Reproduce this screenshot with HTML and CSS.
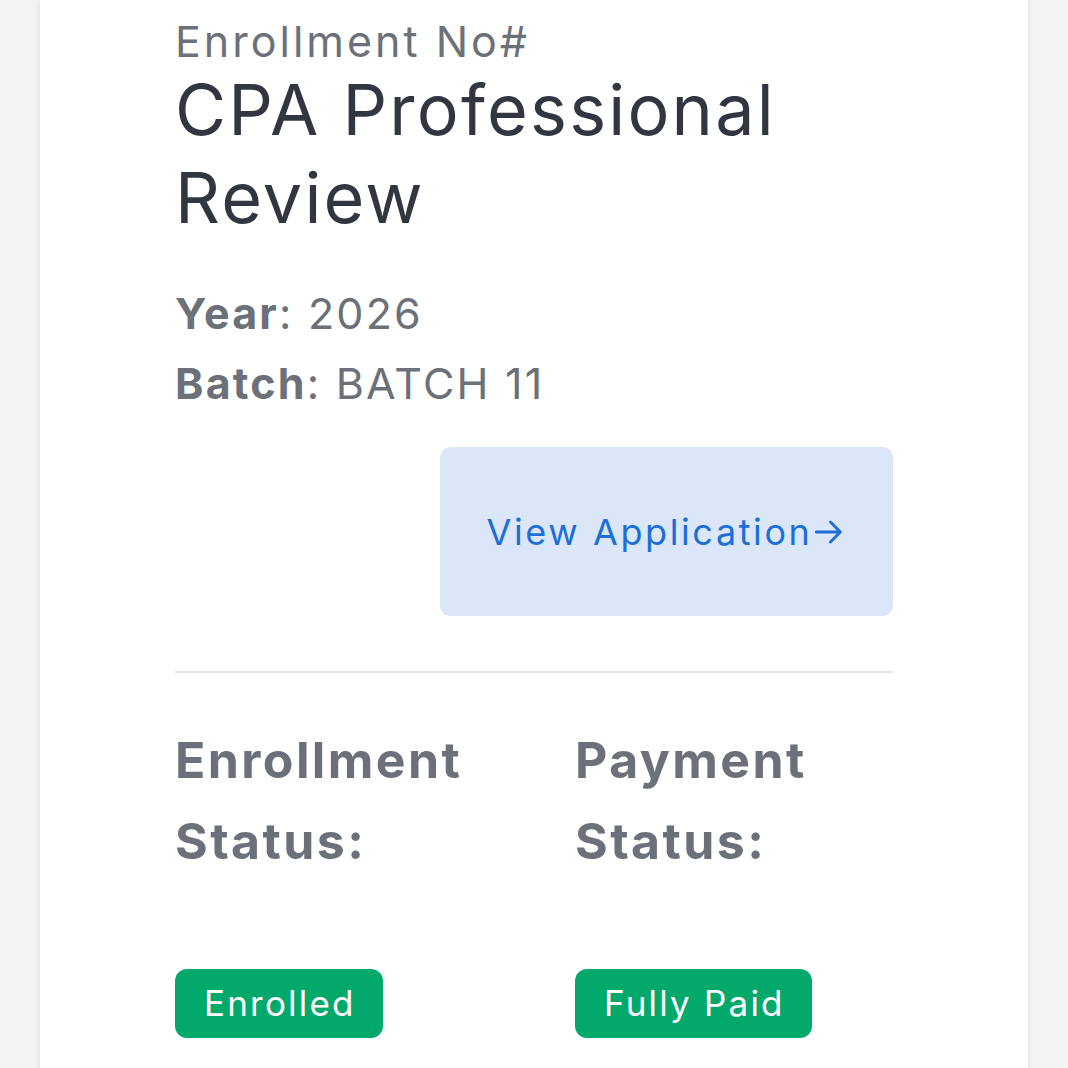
FILE: index.html
```html
<!DOCTYPE html>
<html>
<head>
<meta charset="utf-8">
<link rel="stylesheet" href="styles.css">
</head>
<body>
<div class="page">
  <div class="card">
    <div class="label">Enrollment No#</div>
    <h1 class="title">CPA Professional Review</h1>
    <div class="meta">
      <div class="meta-row"><b>Year</b>: 2026</div>
      <div class="meta-row"><b>Batch</b>: BATCH 11</div>
    </div>
    <div class="actions">
      <a class="btn" href="#">View Application<svg class="arrow" viewBox="0 0 24 24" width="34" height="34"><path d="M3 12h17M13 5l7 7-7 7" fill="none" stroke="currentColor" stroke-width="2" stroke-linecap="round" stroke-linejoin="round"/></svg></a>
    </div>
    <hr class="divider">
    <div class="status-grid">
      <div class="status">
        <div class="status-title">Enrollment Status:</div>
        <span class="badge">Enrolled</span>
      </div>
      <div class="status">
        <div class="status-title">Payment Status:</div>
        <span class="badge">Fully Paid</span>
      </div>
    </div>
  </div>
</div>
</body>
</html>
```

FILE: styles.css
```css
html, body {
  margin: 0;
  padding: 0;
  background: #f3f4f4;
  height: 1068px;
  overflow: hidden;
}
.page {
  padding-left: 40px;
  padding-right: 40px;
}
.card {
  background: #ffffff;
  box-shadow: 0 0 6px rgba(0,0,0,0.10);
  padding: 16px 135px 40px 135px;
  font-family: Inter, "Noto Sans", sans-serif;
  min-height: 1100px;
}
.label {
  font-size: 43px;
  color: #6b7079;
  line-height: 50px;
  letter-spacing: 3px;
}
.title {
  margin: 0;
  font-weight: 400;
  font-size: 70px;
  line-height: 88px;
  color: #313640;
  letter-spacing: 2.2px;
}
.meta {
  margin-top: 36px;
}
.meta-row {
  font-size: 43px;
  line-height: 70px;
  color: #6b7079;
  letter-spacing: 2.2px;
}
.meta-row b {
  font-weight: 700;
}
.actions {
  display: flex;
  justify-content: flex-end;
  margin-top: 29px;
}
.btn {
  width: 453px;
  height: 169px;
  box-sizing: border-box;
  background: #dbe7f9;
  border-radius: 10px;
  color: #1c6fd8;
  text-decoration: none;
  font-size: 36px;
  letter-spacing: 2.6px;
  display: flex;
  align-items: center;
  justify-content: center;
  gap: 0;
}
.arrow {
  display: block;
}
.divider {
  border: none;
  border-top: 2px solid #e3e5e7;
  margin: 55px 0 0 0;
}
.status-grid {
  display: grid;
  grid-template-columns: 1fr 1fr;
  column-gap: 82px;
  margin-top: 47px;
}
.status-title {
  font-size: 50px;
  font-weight: 700;
  line-height: 81px;
  color: #6b7079;
  letter-spacing: 2.4px;
}
.badge {
  display: inline-block;
  margin-top: 87px;
  background: #03a96b;
  color: #ffffff;
  border-radius: 12px;
  font-size: 35px;
  line-height: 69px;
  padding: 0 27px 0 29px;
  letter-spacing: 2.2px;
}
```
